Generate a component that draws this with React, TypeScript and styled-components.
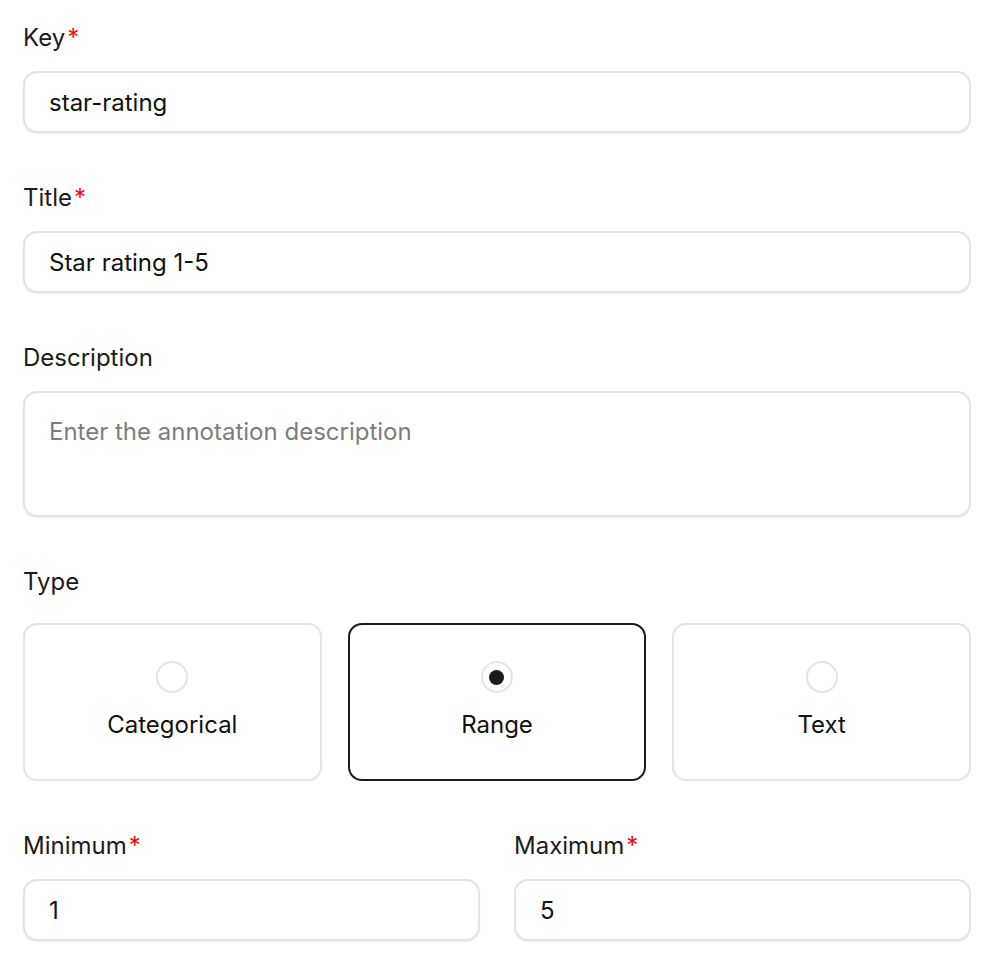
import styled, { createGlobalStyle } from "styled-components";

const GlobalStyle = createGlobalStyle`
  html, body {
    margin: 0;
    padding: 0;
    background: #ffffff;
  }
  body {
    font-family: Inter, "Noto Sans", sans-serif;
    color: #1b1b1b;
  }
  * {
    box-sizing: border-box;
  }
`;

const Form = styled.form`
  display: flex;
  flex-direction: column;
  gap: 51px;
  padding: 24px 21px 40px 23px;
`;

const Field = styled.div<{ $gap?: number }>`
  display: flex;
  flex-direction: column;
  gap: ${(p) => p.$gap ?? 19}px;
  min-width: 0;
`;

const Label = styled.label`
  font-size: 24px;
  line-height: 28px;
  font-weight: 400;
  color: #1b1b1b;
`;

const Required = styled.span`
  color: #f00a0a;
  margin-left: 2px;
`;

const Input = styled.input`
  width: 100%;
  height: 62px;
  padding: 0 24px;
  border: 2px solid #e4e4e4;
  border-radius: 14px;
  background: #fff;
  box-shadow: 0 1px 2px rgba(0, 0, 0, 0.06);
  font-family: inherit;
  font-size: 24px;
  font-weight: 400;
  color: #111111;
  outline: none;

  &::placeholder {
    color: #7c7c7c;
  }
`;

const TextArea = styled.textarea`
  width: 100%;
  height: 126px;
  padding: 21px 24px;
  border: 2px solid #e4e4e4;
  border-radius: 14px;
  background: #fff;
  box-shadow: 0 1px 2px rgba(0, 0, 0, 0.06);
  font-family: inherit;
  font-size: 24px;
  line-height: 36px;
  color: #111111;
  resize: none;
  outline: none;
  display: block;

  &::placeholder {
    color: #7c7c7c;
  }
`;

const CardGrid = styled.div`
  display: grid;
  grid-template-columns: repeat(3, 1fr);
  gap: 26px;
`;

const TypeCard = styled.div<{ $selected?: boolean }>`
  height: 158px;
  border: 2px solid ${(p) => (p.$selected ? "#1b1b1b" : "#e4e4e4")};
  border-radius: 14px;
  background: #fff;
  display: flex;
  flex-direction: column;
  align-items: center;
  justify-content: center;
  gap: 18px;
  padding-bottom: 4px;
  cursor: pointer;
`;

const Radio = styled.span<{ $checked?: boolean }>`
  width: 32px;
  height: 32px;
  border-radius: 50%;
  border: 2px solid #e4e4e4;
  background: #fff;
  display: flex;
  align-items: center;
  justify-content: center;

  &::after {
    content: "";
    width: 15px;
    height: 15px;
    border-radius: 50%;
    background: #1b1b1b;
    display: ${(p) => (p.$checked ? "block" : "none")};
  }
`;

const CardLabel = styled.span`
  font-size: 24px;
  line-height: 28px;
  font-weight: 400;
  color: #111111;
`;

const TwoColumns = styled.div`
  display: grid;
  grid-template-columns: 1fr 1fr;
  gap: 34px;
`;

const types = ["Categorical", "Range", "Text"];

export default function App() {
  const selected = "Range";

  return (
    <>
      <GlobalStyle />
      <Form onSubmit={(e) => e.preventDefault()}>
        <Field>
          <Label>
            Key<Required>*</Required>
          </Label>
          <Input defaultValue="star-rating" />
        </Field>

        <Field>
          <Label>
            Title<Required>*</Required>
          </Label>
          <Input defaultValue="Star rating 1-5" />
        </Field>

        <Field>
          <Label>Description</Label>
          <TextArea placeholder="Enter the annotation description" />
        </Field>

        <Field $gap={27}>
          <Label>Type</Label>
          <CardGrid>
            {types.map((t) => (
              <TypeCard key={t} $selected={t === selected}>
                <Radio $checked={t === selected} />
                <CardLabel>{t}</CardLabel>
              </TypeCard>
            ))}
          </CardGrid>
        </Field>

        <TwoColumns>
          <Field>
            <Label>
              Minimum<Required>*</Required>
            </Label>
            <Input defaultValue="1" />
          </Field>
          <Field>
            <Label>
              Maximum<Required>*</Required>
            </Label>
            <Input defaultValue="5" />
          </Field>
        </TwoColumns>
      </Form>
    </>
  );
}
